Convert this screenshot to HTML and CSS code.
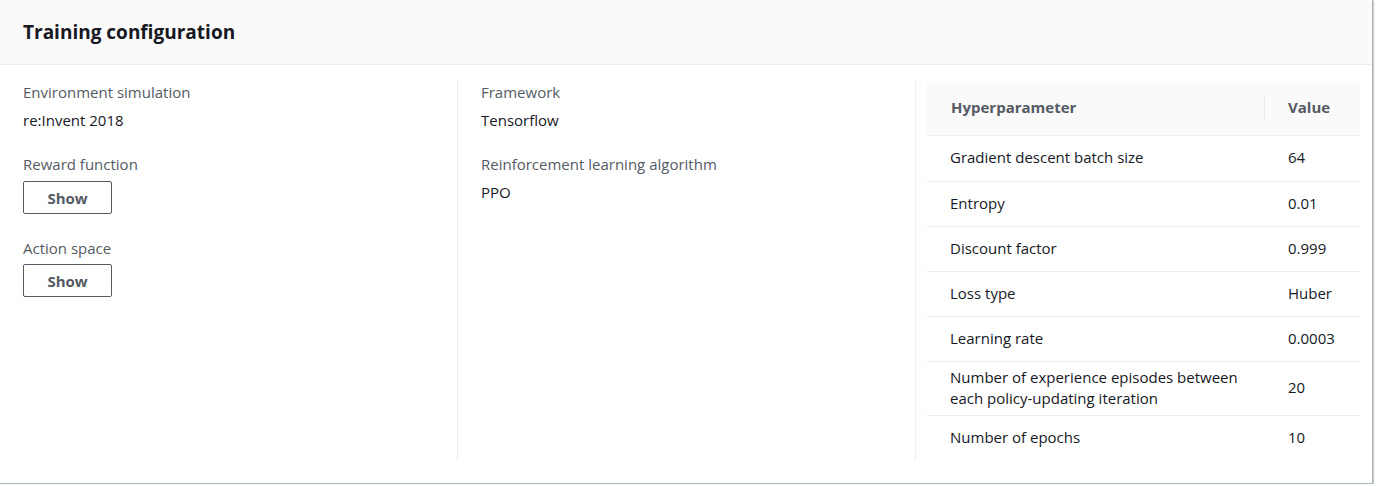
FILE: index.html
```html
<!DOCTYPE html>
<html>
<head>
<meta charset="utf-8">
<link rel="stylesheet" href="styles.css">
</head>
<body>
<div class="card">
  <div class="card-header"><h2>Training configuration</h2></div>
  <div class="card-body">
    <div class="col col-first">
      <div class="field">
        <div class="label">Environment simulation</div>
        <div class="value">re:Invent 2018</div>
      </div>
      <div class="field field-btn">
        <div class="label">Reward function</div>
        <button class="btn">Show</button>
      </div>
      <div class="field field-btn">
        <div class="label">Action space</div>
        <button class="btn">Show</button>
      </div>
    </div>
    <div class="col col-mid">
      <div class="field">
        <div class="label">Framework</div>
        <div class="value">Tensorflow</div>
      </div>
      <div class="field">
        <div class="label">Reinforcement learning algorithm</div>
        <div class="value">PPO</div>
      </div>
    </div>
    <div class="col col-last">
      <table class="hp">
        <thead>
          <tr><th class="c1"><span>Hyperparameter</span></th><th class="c2"><span>Value</span></th></tr>
        </thead>
        <tbody>
          <tr class="first"><td>Gradient descent batch size</td><td>64</td></tr>
          <tr><td>Entropy</td><td>0.01</td></tr>
          <tr><td>Discount factor</td><td>0.999</td></tr>
          <tr><td>Loss type</td><td>Huber</td></tr>
          <tr><td>Learning rate</td><td>0.0003</td></tr>
          <tr><td>Number of experience episodes between<br>each policy-updating iteration</td><td>20</td></tr>
          <tr><td>Number of epochs</td><td>10</td></tr>
        </tbody>
      </table>
    </div>
  </div>
</div>
</body>
</html>
```
FILE: styles.css
```css
* { box-sizing: border-box; }
html, body { margin: 0; padding: 0; background: #fff; }
body {
  font-family: "Open Sans", "Liberation Sans", sans-serif;
  font-size: 15px;
  color: #16191f;
}
.card {
  width: 1373px;
  height: 484px;
  background: #fff;
  border-right: 1px solid #aab7b8;
  border-bottom: 1px solid #aab7b8;
  box-shadow: 1px 1px 1px rgba(0,0,0,0.2);
  display: flex;
  flex-direction: column;
}
.card-header {
  flex: 0 0 65px;
  height: 65px;
  background: #fafafa;
  border-bottom: 1px solid #eaeded;
  padding: 0 23px 1px;
  display: flex;
  align-items: center;
}
.card-header h2 {
  margin: 0;
  font-size: 19px;
  font-weight: 700;
  color: #16191f;
}
.card-body {
  flex: 1;
  min-height: 0;
  display: grid;
  grid-template-columns: 434px 458px 445px;
  padding: 15px 12px 22px 23px;
}
.col-mid { border-left: 1px solid #eaeded; padding-left: 23px; }
.col-last { border-left: 1px solid #eaeded; padding-left: 11px; padding-top: 1px; }
.field { margin-bottom: 22px; }
.field-btn { margin-bottom: 23px; }
.label {
  color: #545b64;
  line-height: 22px;
  margin-top: 1px;
}
.value {
  color: #16191f;
  line-height: 22px;
  margin-top: 6px;
}
.btn {
  display: block;
  margin-top: 6px;
  width: 89px;
  height: 33px;
  border: 1px solid #545b64;
  border-radius: 2px;
  background: #fff;
  color: #545b64;
  font-family: inherit;
  font-size: 15px;
  font-weight: 700;
  padding: 0;
  cursor: pointer;
}
.field-btn + .field-btn .btn { margin-top: 5px; }
.hp {
  width: 433px;
  border-collapse: collapse;
}
.hp th {
  background: #fafafa;
  height: 54px;
  padding: 0;
  text-align: left;
  color: #545b64;
  font-weight: 700;
  border-bottom: 1px solid #eaeded;
}
.hp th.c1 { width: 338px; }
.hp th.c1 span {
  display: block;
  padding-left: 24px;
  border-right: 1px solid #eaeded;
  line-height: 27px;
}
.hp th.c2 span { display: block; padding-left: 23px; line-height: 27px; }
.hp tbody tr { height: 45px; }
.hp tbody tr.first { height: 46px; }
.hp td {
  padding: 5px 0 6px 23px;
  line-height: 21px;
  border-bottom: 1px solid #eaeded;
  color: #16191f;
  vertical-align: middle;
}
.hp tbody tr:last-child td { border-bottom: none; }
```
